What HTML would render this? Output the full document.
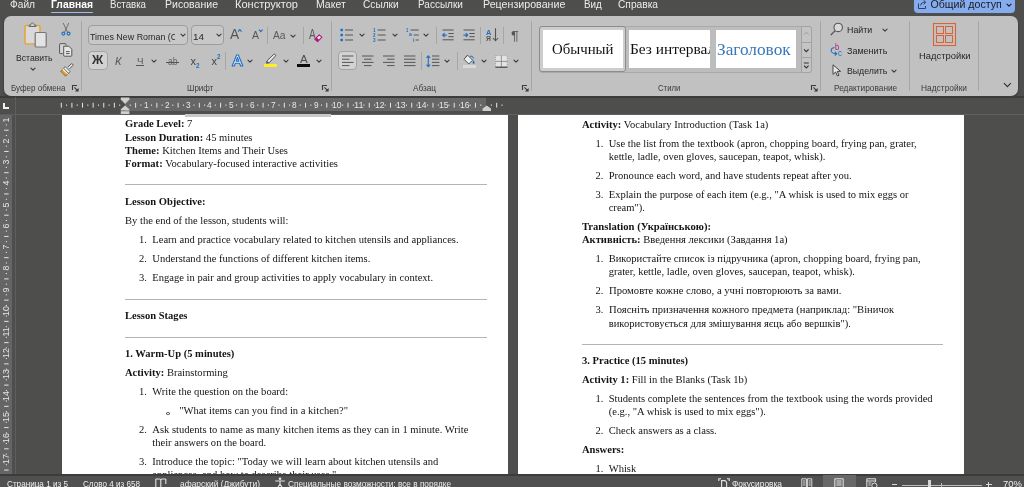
<!DOCTYPE html>
<html><head><meta charset="utf-8"><title>Word</title>
<style>
html,body{margin:0;padding:0}
body{width:1024px;height:487px;overflow:hidden;position:relative;background:#4e4f4d;font-family:"Liberation Sans",sans-serif}
.t{position:absolute;white-space:nowrap;transform-origin:0 50%;display:block}
.f{font-family:"Liberation Sans",sans-serif}
.r{font-family:"Liberation Serif",serif}
.a{position:absolute}
.sep{position:absolute;width:1px;background:#a9a9a9}
svg{position:absolute;overflow:visible}
</style></head><body><div id="w" style="position:absolute;left:0;top:0;width:1024px;height:487px;overflow:hidden;will-change:transform">
<span class="t f" style="left:9.5px;top:-1.56px;font-size:10.6px;line-height:12.72px;color:#ececec;transform:scaleX(0.960);">Файл</span>
<span class="t f" style="left:51px;top:-1.56px;font-size:10.6px;line-height:12.72px;color:#ffffff;font-weight:700;transform:scaleX(0.975);">Главная</span>
<span class="t f" style="left:110px;top:-1.56px;font-size:10.6px;line-height:12.72px;color:#ececec;transform:scaleX(0.914);">Вставка</span>
<span class="t f" style="left:165px;top:-1.56px;font-size:10.6px;line-height:12.72px;color:#ececec;transform:scaleX(0.993);">Рисование</span>
<span class="t f" style="left:235px;top:-1.56px;font-size:10.6px;line-height:12.72px;color:#ececec;transform:scaleX(1.043);">Конструктор</span>
<span class="t f" style="left:315.6px;top:-1.56px;font-size:10.6px;line-height:12.72px;color:#ececec;transform:scaleX(0.991);">Макет</span>
<span class="t f" style="left:363px;top:-1.56px;font-size:10.6px;line-height:12.72px;color:#ececec;transform:scaleX(0.957);">Ссылки</span>
<span class="t f" style="left:417.6px;top:-1.56px;font-size:10.6px;line-height:12.72px;color:#ececec;transform:scaleX(0.944);">Рассылки</span>
<span class="t f" style="left:482.6px;top:-1.56px;font-size:10.6px;line-height:12.72px;color:#ececec;transform:scaleX(1.007);">Рецензирование</span>
<span class="t f" style="left:583.5px;top:-1.56px;font-size:10.6px;line-height:12.72px;color:#ececec;transform:scaleX(0.928);">Вид</span>
<span class="t f" style="left:618.4px;top:-1.56px;font-size:10.6px;line-height:12.72px;color:#ececec;transform:scaleX(0.962);">Справка</span>
<div class="a" style="left:50.8px;top:11.8px;width:42px;height:1.3px;background:#9fbcf2;border-radius:1px"></div>
<div class="a" style="left:913.5px;top:-4px;width:101.5px;height:17.3px;background:#85acee;border-radius:4px"></div>
<svg style="left:917px;top:-1px" width="11" height="11" viewBox="0 0 11 11"><path d="M1.5 4.5V9.5H8.5V7" fill="none" stroke="#34405c" stroke-width="1"/><path d="M3.5 6.5C4 4.2 5.5 3.2 8 3.2M6.5 1L8.8 3.2L6.5 5.4" fill="none" stroke="#34405c" stroke-width="1"/></svg>
<span class="t f" style="left:930.5px;top:-1.96px;font-size:10.6px;line-height:12.72px;color:#1b1b1b;">Общий доступ</span>
<svg style="left:1005px;top:0.5px" width="8" height="8" viewBox="-4 -4 8 8"><path d="M-2.05 -0.825 L0 1.2249999999999999 L2.05 -0.825" fill="none" stroke="#1b1b1b" stroke-width="1.1" stroke-linecap="round" stroke-linejoin="round"/></svg>
<div class="a" style="left:4px;top:16px;width:1014px;height:80px;background:#c1c1c1;border-radius:7px;box-shadow:0 1px 2px rgba(0,0,0,.45)"></div>
<svg style="left:24px;top:22px" width="24" height="26" viewBox="0 0 24 26"><rect x="1" y="3.5" width="15" height="18.5" rx="1.2" fill="#d9d9d9" stroke="#e2a93b" stroke-width="1.6"/><path d="M5 4.5V3.2H6.6C6.8 1.6 7.6 1 8.5 1S10.2 1.6 10.4 3.2H12V4.5Z" fill="#cfcfcf" stroke="#6a6a6a" stroke-width="1"/><rect x="11.2" y="10.5" width="11" height="14.5" rx="1" fill="#e3e3e3" stroke="#767676" stroke-width="1.2"/></svg>
<span class="t f" style="left:15.5px;top:51.5px;font-size:9.5px;line-height:11.4px;color:#262626;transform:scaleX(0.906);">Вставить</span>
<svg style="left:29.299999999999997px;top:64.5px" width="8" height="8" viewBox="-4 -4 8 8"><path d="M-2.05 -0.825 L0 1.2249999999999999 L2.05 -0.825" fill="none" stroke="#3b3b3b" stroke-width="1.1" stroke-linecap="round" stroke-linejoin="round"/></svg>
<svg style="left:60px;top:22px" width="12" height="15" viewBox="0 0 12 15"><path d="M3.2 1L7.6 10.5M8.8 1L4.4 10.5" stroke="#666" stroke-width="0.9" fill="none"/><circle cx="3.4" cy="11.6" r="1.5" fill="none" stroke="#1e6fc4" stroke-width="1.1"/><circle cx="8.6" cy="11.6" r="1.5" fill="none" stroke="#1e6fc4" stroke-width="1.1"/></svg>
<svg style="left:59px;top:43px" width="14" height="14" viewBox="0 0 14 14"><path d="M3.5 10.5H1.2Q0.6 10.5 0.6 9.9V1.3Q0.6 0.7 1.2 0.7H6.4Q7 0.7 7 1.3V2.5" fill="#d6d6d6" stroke="#555" stroke-width="1"/><path d="M4.7 3.2H9.8L12.8 6.2V12.6Q12.8 13.2 12.2 13.2H5.3Q4.7 13.2 4.7 12.6Z" fill="#e6e6e6" stroke="#555" stroke-width="1"/><path d="M7 8.6H10.6M7 10.6H10.6" stroke="#555" stroke-width="1"/></svg>
<svg style="left:59.5px;top:63px" width="14" height="14" viewBox="0 0 14 14"><path d="M7.8 4.2L11.2 0.9Q11.9 0.4 12.6 1.1T12.7 2.6L9.4 5.9" fill="#e9e9e9" stroke="#555" stroke-width="1"/><path d="M5.2 3.6L10.2 8.6L8.4 10.2L3.6 5.2Z" fill="#f2f2f2" stroke="#555" stroke-width="0.9"/><path d="M3.3 5.6L8 10.4L5.6 13.2L0.7 8.2Z" fill="#e0a12e" stroke="#6b5320" stroke-width="0.7"/><path d="M3.3 5.6L8 10.4L7.2 11.3L2.4 6.5Z" fill="#f4f4f4"/></svg>
<span class="t f" style="left:10.5px;top:82.8px;font-size:9px;line-height:10.8px;color:#3c3c3c;transform:scaleX(0.891);">Буфер обмена</span>
<svg style="left:72px;top:85px" width="7" height="7" viewBox="0 0 7 7"><path d="M0.5 5V0.5H5" fill="none" stroke="#3a3a3a" stroke-width="1.1"/><path d="M2.4 2.4L5.6 5.6" fill="none" stroke="#3a3a3a" stroke-width="1.1"/><path d="M6.6 2.9V6.6H2.9Z" fill="#3a3a3a"/></svg>
<div class="a" style="left:80.5px;top:21px;width:1px;height:70px;background:#a6a6a6;"></div>
<div class="a" style="left:88px;top:25.4px;width:100px;height:19.2px;background:#c8c8c8;border:1px solid #9d9d9d;border-radius:4px;box-sizing:border-box"></div>
<span class="t f" style="left:90.3px;top:30.6px;font-size:9.5px;line-height:11.4px;color:#262626;transform:scaleX(0.937);">Times New Roman (C</span>
<div class="a" style="left:175px;top:27px;width:6px;height:15px;background:#c8c8c8;"></div>
<svg style="left:179px;top:31.299999999999997px" width="8" height="8" viewBox="-4 -4 8 8"><path d="M-2.05 -0.825 L0 1.2249999999999999 L2.05 -0.825" fill="none" stroke="#3b3b3b" stroke-width="1.1" stroke-linecap="round" stroke-linejoin="round"/></svg>
<div class="a" style="left:190.5px;top:25.4px;width:33px;height:19.2px;background:#c8c8c8;border:1px solid #9d9d9d;border-radius:4px;box-sizing:border-box"></div>
<span class="t f" style="left:192.5px;top:30.6px;font-size:9.5px;line-height:11.4px;color:#262626;transform:scaleX(1.040);">14</span>
<svg style="left:215px;top:31.299999999999997px" width="8" height="8" viewBox="-4 -4 8 8"><path d="M-2.05 -0.825 L0 1.2249999999999999 L2.05 -0.825" fill="none" stroke="#3b3b3b" stroke-width="1.1" stroke-linecap="round" stroke-linejoin="round"/></svg>
<span class="t f" style="left:229.6px;top:25.8px;font-size:14.5px;line-height:17.4px;color:#555;transform:scaleX(0.951);">A</span>
<svg style="left:237.3px;top:28.2px" width="6" height="5" viewBox="0 0 6 5"><path d="M1 3.6L2.8 1.6L4.6 3.6" fill="none" stroke="#1e6fc4" stroke-width="1.1"/></svg>
<span class="t f" style="left:252px;top:28.48px;font-size:11.7px;line-height:14.04px;color:#555;transform:scaleX(0.898);">A</span>
<svg style="left:258px;top:28.2px" width="6" height="5" viewBox="0 0 6 5"><path d="M1 1.6L2.8 3.6L4.6 1.6" fill="none" stroke="#1e6fc4" stroke-width="1.1"/></svg>
<div class="a" style="left:267.0px;top:27px;width:1px;height:17px;background:#a6a6a6;"></div>
<span class="t f" style="left:273.4px;top:28.58px;font-size:11.2px;line-height:13.44px;color:#5a5a5a;transform:scaleX(0.921);">Aa</span>
<svg style="left:289px;top:31.5px" width="8" height="8" viewBox="-4 -4 8 8"><path d="M-2.05 -0.825 L0 1.2249999999999999 L2.05 -0.825" fill="none" stroke="#3b3b3b" stroke-width="1.1" stroke-linecap="round" stroke-linejoin="round"/></svg>
<div class="a" style="left:303.0px;top:27px;width:1px;height:17px;background:#a6a6a6;"></div>
<span class="t f" style="left:308.8px;top:25.9px;font-size:14px;line-height:16.8px;color:#5a5a5a;transform:scaleX(0.728);">A</span>
<svg style="left:313.6px;top:33.6px" width="9" height="9" viewBox="0 0 9 9"><path d="M0.9 5.4L5.2 0.9L7.9 3.2L3.6 7.7Z" fill="#ececec" stroke="#b5177a" stroke-width="1.1" stroke-linejoin="round"/><path d="M0.9 5.4L2.6 3.6L5.3 5.9L3.6 7.7Z" fill="#b5177a"/></svg>
<div class="a" style="left:88.3px;top:51.2px;width:19.3px;height:19.3px;background:#d2d2d2;border:1px solid #a3a3a3;border-radius:4px;box-sizing:border-box"></div>
<span class="t f" style="left:92.4px;top:53.3px;font-size:12px;line-height:14.4px;color:#333;font-weight:700;transform:scaleX(1.022);">Ж</span>
<span class="t f" style="left:115px;top:55.0px;font-size:11px;line-height:13.2px;color:#555;font-style:italic;">К</span>
<span class="t f" style="left:136.5px;top:54.62px;font-size:9.8px;line-height:11.76px;color:#555;transform:scaleX(0.995);">Ч</span>
<div class="a" style="left:135.8px;top:65px;width:8px;height:1px;background:#555;"></div>
<svg style="left:150.3px;top:57.3px" width="8" height="8" viewBox="-4 -4 8 8"><path d="M-2.05 -0.825 L0 1.2249999999999999 L2.05 -0.825" fill="none" stroke="#3b3b3b" stroke-width="1.1" stroke-linecap="round" stroke-linejoin="round"/></svg>
<span class="t f" style="left:167.5px;top:54.72px;font-size:10.8px;line-height:12.96px;color:#666;transform:scaleX(0.791);">ab</span>
<div class="a" style="left:166px;top:61.6px;width:13px;height:1px;background:#555;"></div>
<span class="t f" style="left:190.5px;top:55.0px;font-size:11px;line-height:13.2px;color:#444;">x</span>
<span class="t f" style="left:196px;top:61.9px;font-size:6.5px;line-height:7.8px;color:#1e6fc4;font-weight:700;transform:scaleX(0.966);">2</span>
<span class="t f" style="left:211.5px;top:55.0px;font-size:11px;line-height:13.2px;color:#444;">x</span>
<span class="t f" style="left:217px;top:53.2px;font-size:6.5px;line-height:7.8px;color:#1e6fc4;font-weight:700;transform:scaleX(0.966);">2</span>
<div class="a" style="left:225.0px;top:52px;width:1px;height:18px;background:#a6a6a6;"></div>
<svg style="left:231px;top:54px" width="13" height="13" viewBox="0 0 13 13"><path d="M1.2 12L5.6 1H7.4L11.8 12H9.6L8.6 9.2H4.4L3.4 12Z M5.1 7.3H7.9L6.5 3.4Z" fill="#eaf2fb" stroke="#1e6fc4" stroke-width="1.1" stroke-linejoin="round"/></svg>
<svg style="left:246px;top:57.3px" width="8" height="8" viewBox="-4 -4 8 8"><path d="M-2.05 -0.825 L0 1.2249999999999999 L2.05 -0.825" fill="none" stroke="#3b3b3b" stroke-width="1.1" stroke-linecap="round" stroke-linejoin="round"/></svg>
<svg style="left:265px;top:53px" width="13" height="11" viewBox="0 0 13 11"><path d="M2.2 9.6L1.8 8L8.6 1.4Q9.4 0.8 10.2 1.5T10.4 3.1L4.2 9.8Z" fill="#e4e4e4" stroke="#555" stroke-width="1"/><path d="M1.8 8L4.2 9.8L2.6 10.6H0.9Z" fill="#555"/></svg>
<div class="a" style="left:264.2px;top:64px;width:13px;height:3.2px;background:#ffef1f;"></div>
<svg style="left:281.5px;top:57.3px" width="8" height="8" viewBox="-4 -4 8 8"><path d="M-2.05 -0.825 L0 1.2249999999999999 L2.05 -0.825" fill="none" stroke="#3b3b3b" stroke-width="1.1" stroke-linecap="round" stroke-linejoin="round"/></svg>
<span class="t f" style="left:299.5px;top:52.18px;font-size:11.7px;line-height:14.04px;color:#4a4a4a;transform:scaleX(0.988);">A</span>
<div class="a" style="left:297px;top:64px;width:13px;height:3.2px;background:#0c0c0c;"></div>
<svg style="left:314.5px;top:57.3px" width="8" height="8" viewBox="-4 -4 8 8"><path d="M-2.05 -0.825 L0 1.2249999999999999 L2.05 -0.825" fill="none" stroke="#3b3b3b" stroke-width="1.1" stroke-linecap="round" stroke-linejoin="round"/></svg>
<span class="t f" style="left:186.5px;top:82.8px;font-size:9px;line-height:10.8px;color:#3c3c3c;transform:scaleX(0.895);">Шрифт</span>
<svg style="left:322px;top:85px" width="7" height="7" viewBox="0 0 7 7"><path d="M0.5 5V0.5H5" fill="none" stroke="#3a3a3a" stroke-width="1.1"/><path d="M2.4 2.4L5.6 5.6" fill="none" stroke="#3a3a3a" stroke-width="1.1"/><path d="M6.6 2.9V6.6H2.9Z" fill="#3a3a3a"/></svg>
<div class="a" style="left:330.5px;top:21px;width:1px;height:70px;background:#a6a6a6;"></div>
<svg style="left:340px;top:27.5px" width="14" height="14" viewBox="0 0 14 14"><rect x="0.4" y="0.8" width="2.6" height="2.4" rx="0.6" fill="#1e6fc4"/><rect x="0.4" y="5.8" width="2.6" height="2.4" rx="0.6" fill="#1e6fc4"/><rect x="0.4" y="10.8" width="2.6" height="2.4" rx="0.6" fill="#1e6fc4"/><path d="M5 2H13" stroke="#555" stroke-width="1"/><path d="M5 7H13" stroke="#555" stroke-width="1"/><path d="M5 12H13" stroke="#555" stroke-width="1"/></svg>
<svg style="left:358px;top:31.299999999999997px" width="8" height="8" viewBox="-4 -4 8 8"><path d="M-2.05 -0.825 L0 1.2249999999999999 L2.05 -0.825" fill="none" stroke="#3b3b3b" stroke-width="1.1" stroke-linecap="round" stroke-linejoin="round"/></svg>
<svg style="left:373px;top:27.5px" width="14" height="14" viewBox="0 0 14 14"><path d="M4.6 2H12.6" stroke="#555" stroke-width="1"/><path d="M4.6 7H12.6" stroke="#555" stroke-width="1"/><path d="M4.6 12H12.6" stroke="#555" stroke-width="1"/></svg>
<span class="t f" style="left:373.2px;top:27.08px;font-size:5.2px;line-height:6.24px;color:#1e6fc4;font-weight:700;transform:scaleX(0.899);">1</span>
<span class="t f" style="left:373.2px;top:32.08px;font-size:5.2px;line-height:6.24px;color:#1e6fc4;font-weight:700;transform:scaleX(0.899);">2</span>
<span class="t f" style="left:373.2px;top:37.08px;font-size:5.2px;line-height:6.24px;color:#1e6fc4;font-weight:700;transform:scaleX(0.899);">3</span>
<svg style="left:390.7px;top:31.299999999999997px" width="8" height="8" viewBox="-4 -4 8 8"><path d="M-2.05 -0.825 L0 1.2249999999999999 L2.05 -0.825" fill="none" stroke="#3b3b3b" stroke-width="1.1" stroke-linecap="round" stroke-linejoin="round"/></svg>
<svg style="left:405.5px;top:27.5px" width="14" height="14" viewBox="0 0 14 14"><path d="M4.5 2H12.8" stroke="#555" stroke-width="1"/><path d="M7.8 7H12.8" stroke="#555" stroke-width="1"/><path d="M9.6 12H12.8" stroke="#555" stroke-width="1"/></svg>
<span class="t f" style="left:406px;top:27.28px;font-size:5.2px;line-height:6.24px;color:#1e6fc4;font-weight:700;transform:scaleX(0.796);">1</span>
<span class="t f" style="left:408.5px;top:31.44px;font-size:5.6px;line-height:6.72px;color:#1e6fc4;font-weight:700;transform:scaleX(0.928);">a</span>
<span class="t f" style="left:412.6px;top:36.64px;font-size:5.6px;line-height:6.72px;color:#1e6fc4;font-weight:700;transform:scaleX(0.896);">i</span>
<svg style="left:422px;top:31.299999999999997px" width="8" height="8" viewBox="-4 -4 8 8"><path d="M-2.05 -0.825 L0 1.2249999999999999 L2.05 -0.825" fill="none" stroke="#3b3b3b" stroke-width="1.1" stroke-linecap="round" stroke-linejoin="round"/></svg>
<div class="a" style="left:436.0px;top:27px;width:1px;height:17px;background:#a6a6a6;"></div>
<svg style="left:442.4px;top:28.5px" width="13" height="13" viewBox="0 0 13 13"><path d="M0.5 1H11.7" stroke="#555" stroke-width="1"/><path d="M0.5 10.8H11.7" stroke="#555" stroke-width="1"/><path d="M6.4 4.5H11.7" stroke="#555" stroke-width="1"/><path d="M6.4 7.7H11.7" stroke="#555" stroke-width="1"/><path d="M4.8 6.1H0.8M2.6 4.2L0.7 6.1L2.6 8" fill="none" stroke="#1e6fc4" stroke-width="1.1"/></svg>
<svg style="left:463.2px;top:28.5px" width="13" height="13" viewBox="0 0 13 13"><path d="M0.5 1H11.7" stroke="#555" stroke-width="1"/><path d="M0.5 10.8H11.7" stroke="#555" stroke-width="1"/><path d="M6.4 4.5H11.7" stroke="#555" stroke-width="1"/><path d="M6.4 7.7H11.7" stroke="#555" stroke-width="1"/><path d="M0.4 6.1H4.6M2.8 4.2L4.7 6.1L2.8 8" fill="none" stroke="#1e6fc4" stroke-width="1.1"/></svg>
<div class="a" style="left:479.5px;top:27px;width:1px;height:17px;background:#a6a6a6;"></div>
<span class="t f" style="left:486px;top:27.52px;font-size:7.8px;line-height:9.36px;color:#1e6fc4;font-weight:700;transform:scaleX(0.940);">A</span>
<span class="t f" style="left:486.3px;top:34.88px;font-size:7.2px;line-height:8.64px;color:#555;font-weight:700;transform:scaleX(0.947);">Я</span>
<svg style="left:492.3px;top:28.3px" width="7" height="14" viewBox="0 0 7 14"><path d="M3.5 0.3V12.6M0.9 10L3.5 12.8L6.1 10" fill="none" stroke="#555" stroke-width="1.1"/></svg>
<div class="a" style="left:503.0px;top:27px;width:1px;height:17px;background:#a6a6a6;"></div>
<span class="t f" style="left:511px;top:28.6px;font-size:12.5px;line-height:15.0px;color:#555;transform:scaleX(1.161);">¶</span>
<div class="a" style="left:337.5px;top:51.2px;width:19.3px;height:19.3px;background:#d2d2d2;border:1px solid #a3a3a3;border-radius:4px;box-sizing:border-box"></div>
<svg style="left:341.5px;top:54.6px" width="12" height="12" viewBox="0 0 12 12"><path d="M0 1H11.5" stroke="#555" stroke-width="1"/><path d="M0 7.4H11.5" stroke="#555" stroke-width="1"/><path d="M0 4.2H7.5" stroke="#555" stroke-width="1"/><path d="M0 10.6H7.5" stroke="#555" stroke-width="1"/></svg>
<svg style="left:362px;top:54.6px" width="12" height="12" viewBox="0 0 12 12"><path d="M0 1H11.5" stroke="#555" stroke-width="1"/><path d="M0 7.4H11.5" stroke="#555" stroke-width="1"/><path d="M2 4.2H9.5" stroke="#555" stroke-width="1"/><path d="M2 10.6H9.5" stroke="#555" stroke-width="1"/></svg>
<svg style="left:383.3px;top:54.6px" width="12" height="12" viewBox="0 0 12 12"><path d="M0 1H11.5" stroke="#555" stroke-width="1"/><path d="M0 7.4H11.5" stroke="#555" stroke-width="1"/><path d="M4 4.2H11.5" stroke="#555" stroke-width="1"/><path d="M4 10.6H11.5" stroke="#555" stroke-width="1"/></svg>
<svg style="left:404.3px;top:54.6px" width="12" height="12" viewBox="0 0 12 12"><path d="M0 1H11.5" stroke="#555" stroke-width="1"/><path d="M0 4.2H11.5" stroke="#555" stroke-width="1"/><path d="M0 7.4H11.5" stroke="#555" stroke-width="1"/><path d="M0 10.6H11.5" stroke="#555" stroke-width="1"/></svg>
<div class="a" style="left:420.5px;top:52px;width:1px;height:18px;background:#a6a6a6;"></div>
<svg style="left:426px;top:54.6px" width="14" height="14" viewBox="0 0 14 14"><path d="M6 1H13.4" stroke="#555" stroke-width="1"/><path d="M6 4.2H13.4" stroke="#555" stroke-width="1"/><path d="M6 7.4H13.4" stroke="#555" stroke-width="1"/><path d="M6 10.6H13.4" stroke="#555" stroke-width="1"/><path d="M2.3 0.8V11.6M0.5 2.8L2.3 0.8L4.1 2.8M0.5 9.6L2.3 11.6L4.1 9.6" fill="none" stroke="#1e6fc4" stroke-width="1.1"/></svg>
<svg style="left:442.5px;top:57.3px" width="8" height="8" viewBox="-4 -4 8 8"><path d="M-2.05 -0.825 L0 1.2249999999999999 L2.05 -0.825" fill="none" stroke="#3b3b3b" stroke-width="1.1" stroke-linecap="round" stroke-linejoin="round"/></svg>
<div class="a" style="left:456.5px;top:52px;width:1px;height:18px;background:#a6a6a6;"></div>
<svg style="left:463px;top:53.5px" width="13" height="12" viewBox="0 0 13 12"><path d="M4.6 1.2L9.6 6.2L5.8 10L1 5.2Z" fill="#ededed" stroke="#555" stroke-width="1"/><path d="M4.6 1.2L2.6 3.2" stroke="#555" stroke-width="1"/><path d="M10.6 6.2Q12.2 8.6 11.4 9.4T9.8 9.4T10.6 6.2Z" fill="#1e6fc4"/><path d="M7 2.2Q9.8 1.2 10.6 4.6" fill="none" stroke="#1e6fc4" stroke-width="1"/></svg>
<div class="a" style="left:463px;top:65.2px;width:12.5px;height:2.6px;background:#d9d9d9;"></div>
<svg style="left:479.5px;top:57.3px" width="8" height="8" viewBox="-4 -4 8 8"><path d="M-2.05 -0.825 L0 1.2249999999999999 L2.05 -0.825" fill="none" stroke="#3b3b3b" stroke-width="1.1" stroke-linecap="round" stroke-linejoin="round"/></svg>
<svg style="left:494.5px;top:54.5px" width="13" height="13" viewBox="0 0 13 13"><rect x="0.6" y="0.6" width="11.6" height="11.6" fill="#e4e4e4" stroke="#9a9a9a" stroke-width="0.8" stroke-dasharray="1 1"/><path d="M6.4 0.4V12.4M0.4 6.4H12.4" stroke="#8a8a8a" stroke-width="0.9"/><path d="M0.4 12.2H12.4" stroke="#444" stroke-width="1.2"/></svg>
<svg style="left:512px;top:57.3px" width="8" height="8" viewBox="-4 -4 8 8"><path d="M-2.05 -0.825 L0 1.2249999999999999 L2.05 -0.825" fill="none" stroke="#3b3b3b" stroke-width="1.1" stroke-linecap="round" stroke-linejoin="round"/></svg>
<span class="t f" style="left:413px;top:82.8px;font-size:9px;line-height:10.8px;color:#3c3c3c;transform:scaleX(0.911);">Абзац</span>
<svg style="left:521.5px;top:85px" width="7" height="7" viewBox="0 0 7 7"><path d="M0.5 5V0.5H5" fill="none" stroke="#3a3a3a" stroke-width="1.1"/><path d="M2.4 2.4L5.6 5.6" fill="none" stroke="#3a3a3a" stroke-width="1.1"/><path d="M6.6 2.9V6.6H2.9Z" fill="#3a3a3a"/></svg>
<div class="a" style="left:530.5px;top:21px;width:1px;height:70px;background:#a6a6a6;"></div>
<div class="a" style="left:539px;top:25.7px;width:273px;height:47.4px;background:#bdbdbd;border:1px solid #a9a9a9;border-radius:3px;box-sizing:border-box"></div>
<div class="a" style="left:539.2px;top:25.8px;width:86.4px;height:46px;background:#cdcdcd;border:1.4px solid #8c8c8c;border-radius:3px;box-sizing:border-box"></div>
<div class="a" style="left:542.5px;top:30px;width:80px;height:38px;background:#ffffff;"></div>
<div class="a" style="left:629px;top:30px;width:80.5px;height:38px;background:#ffffff;"></div>
<div class="a" style="left:715.7px;top:30px;width:80.3px;height:38px;background:#ffffff;"></div>
<span class="t r" style="left:551.5px;top:40.3px;font-size:15px;line-height:18.0px;color:#111;transform:scaleX(0.988);">Обычный</span>
<div class="a" style="left:629px;top:30px;width:80.5px;height:38px;overflow:hidden">
<span class="t r" style="left:1.2px;top:10.3px;font-size:15px;line-height:18.0px;color:#111;transform:scaleX(1.025);">Без интервал</span>
</div>
<span class="t r" style="left:717.3px;top:40.1px;font-size:16px;line-height:19.2px;color:#3a78b8;transform:scaleX(1.079);">Заголовок</span>
<div class="a" style="left:800.5px;top:26px;width:11.5px;height:47px;background:#c4c4c4;border:1px solid #a2a2a2;border-radius:0 3px 3px 0;box-sizing:border-box"></div>
<div class="a" style="left:800.5px;top:41.5px;width:11.5px;height:1px;background:#a2a2a2;"></div>
<div class="a" style="left:800.5px;top:57.3px;width:11.5px;height:1px;background:#a2a2a2;"></div>
<svg style="left:803px;top:31px" width="7" height="5" viewBox="0 0 7 5"><path d="M1 3.6L3.3 1.3L5.6 3.6" fill="none" stroke="#9a9a9a" stroke-width="1"/></svg>
<svg style="left:803px;top:47.5px" width="7" height="5" viewBox="0 0 7 5"><path d="M1 1.3L3.3 3.6L5.6 1.3" fill="none" stroke="#333" stroke-width="1.1"/></svg>
<svg style="left:803px;top:61.5px" width="7" height="8" viewBox="0 0 7 8"><path d="M0.8 1H5.8" stroke="#333" stroke-width="1"/><path d="M1 3.6L3.3 5.9L5.6 3.6" fill="none" stroke="#333" stroke-width="1.1"/></svg>
<span class="t f" style="left:657.7px;top:82.8px;font-size:9px;line-height:10.8px;color:#3c3c3c;transform:scaleX(0.860);">Стили</span>
<svg style="left:811px;top:85px" width="7" height="7" viewBox="0 0 7 7"><path d="M0.5 5V0.5H5" fill="none" stroke="#3a3a3a" stroke-width="1.1"/><path d="M2.4 2.4L5.6 5.6" fill="none" stroke="#3a3a3a" stroke-width="1.1"/><path d="M6.6 2.9V6.6H2.9Z" fill="#3a3a3a"/></svg>
<div class="a" style="left:820.0px;top:21px;width:1px;height:70px;background:#a6a6a6;"></div>
<svg style="left:830px;top:21.5px" width="14" height="14" viewBox="0 0 14 14"><circle cx="8.2" cy="5.4" r="4.2" fill="#d9d9d9" stroke="#555" stroke-width="1.1"/><path d="M5.2 8.6L0.8 13" stroke="#555" stroke-width="1.3"/></svg>
<span class="t f" style="left:846.7px;top:23.8px;font-size:9.5px;line-height:11.4px;color:#262626;transform:scaleX(0.933);">Найти</span>
<svg style="left:881px;top:25.7px" width="8" height="8" viewBox="-4 -4 8 8"><path d="M-2.05 -0.825 L0 1.2249999999999999 L2.05 -0.825" fill="none" stroke="#3b3b3b" stroke-width="1.1" stroke-linecap="round" stroke-linejoin="round"/></svg>
<span class="t f" style="left:834.8px;top:41.5px;font-size:9px;line-height:10.8px;color:#b5177a;transform:scaleX(0.837);">b</span>
<span class="t f" style="left:837.8px;top:47.5px;font-size:9px;line-height:10.8px;color:#1e6fc4;transform:scaleX(0.889);">c</span>
<svg style="left:829.5px;top:46px" width="9" height="10" viewBox="0 0 9 10"><path d="M4.6 1.5Q0.6 2.2 1.2 5Q1.8 7.7 6.4 7.7M4.8 5.9L6.7 7.7L4.8 9.5" fill="none" stroke="#1e6fc4" stroke-width="1.1"/></svg>
<span class="t f" style="left:846.7px;top:44.5px;font-size:9.5px;line-height:11.4px;color:#262626;transform:scaleX(0.944);">Заменить</span>
<svg style="left:831.5px;top:64px" width="10" height="13" viewBox="0 0 10 13"><path d="M1 0.8V10.4L3.6 8L5.4 12L7 11.2L5.2 7.4H8.6Z" fill="#e8e8e8" stroke="#444" stroke-width="1" stroke-linejoin="round"/></svg>
<span class="t f" style="left:846.7px;top:65.2px;font-size:9.5px;line-height:11.4px;color:#262626;transform:scaleX(0.920);">Выделить</span>
<svg style="left:889.5px;top:66.8px" width="8" height="8" viewBox="-4 -4 8 8"><path d="M-2.05 -0.825 L0 1.2249999999999999 L2.05 -0.825" fill="none" stroke="#3b3b3b" stroke-width="1.1" stroke-linecap="round" stroke-linejoin="round"/></svg>
<span class="t f" style="left:833.5px;top:82.8px;font-size:9px;line-height:10.8px;color:#3c3c3c;transform:scaleX(0.922);">Редактирование</span>
<div class="a" style="left:908.5px;top:21px;width:1px;height:70px;background:#a6a6a6;"></div>
<svg style="left:933px;top:23px" width="23" height="23" viewBox="0 0 23 23"><rect x="0.5" y="0.5" width="22" height="22" fill="#c6c0bd" stroke="#d8623a" stroke-width="1.1"/><rect x="3.5" y="3.5" width="7" height="7" fill="#c4c1bf" stroke="#d8623a" stroke-width="1"/><rect x="3.5" y="12.5" width="7" height="7" fill="#c4c1bf" stroke="#d8623a" stroke-width="1"/><rect x="12.5" y="3.5" width="7" height="7" fill="#c4c1bf" stroke="#d8623a" stroke-width="1"/><rect x="12.5" y="12.5" width="7" height="7" fill="#c4c1bf" stroke="#d8623a" stroke-width="1"/></svg>
<span class="t f" style="left:918.5px;top:49.9px;font-size:9.5px;line-height:11.4px;color:#262626;transform:scaleX(0.988);">Надстройки</span>
<span class="t f" style="left:921px;top:82.8px;font-size:9px;line-height:10.8px;color:#3c3c3c;transform:scaleX(0.931);">Надстройки</span>
<div class="a" style="left:978.0px;top:21px;width:1px;height:70px;background:#a6a6a6;"></div>
<svg style="left:1002.5px;top:82px" width="9" height="6" viewBox="0 0 9 6"><path d="M1 1.2L4.4 4.6L7.8 1.2" fill="none" stroke="#333" stroke-width="1.2"/></svg>
<div class="a" style="left:0px;top:96px;width:1024px;height:2.2px;background:#3c3c3c;"></div>
<div class="a" style="left:125.0px;top:98.2px;width:361.0px;height:12.8px;background:#676767;"></div>
<svg style="left:0;top:0" width="1024" height="120" viewBox="0 0 1024 120"><rect x="119.19" y="104.5" width="1" height="1.3" fill="#e6e6e6"/><rect x="113.88" y="102.8" width="1" height="4.8" fill="#e6e6e6"/><rect x="108.57" y="104.5" width="1" height="1.3" fill="#e6e6e6"/><rect x="103.26" y="102.8" width="1" height="4.8" fill="#e6e6e6"/><rect x="97.95" y="104.5" width="1" height="1.3" fill="#e6e6e6"/><rect x="92.64" y="102.8" width="1" height="4.8" fill="#e6e6e6"/><rect x="87.33" y="104.5" width="1" height="1.3" fill="#e6e6e6"/><rect x="82.02" y="102.8" width="1" height="4.8" fill="#e6e6e6"/><rect x="76.71" y="104.5" width="1" height="1.3" fill="#e6e6e6"/><rect x="71.40" y="102.8" width="1" height="4.8" fill="#e6e6e6"/><rect x="66.09" y="104.5" width="1" height="1.3" fill="#e6e6e6"/><rect x="60.78" y="102.8" width="1" height="4.8" fill="#e6e6e6"/><rect x="129.81" y="104.5" width="1" height="1.3" fill="#e6e6e6"/><rect x="135.12" y="102.8" width="1" height="4.8" fill="#e6e6e6"/><rect x="140.43" y="104.5" width="1" height="1.3" fill="#e6e6e6"/><rect x="151.05" y="104.5" width="1" height="1.3" fill="#e6e6e6"/><rect x="156.36" y="102.8" width="1" height="4.8" fill="#e6e6e6"/><rect x="161.67" y="104.5" width="1" height="1.3" fill="#e6e6e6"/><rect x="172.29" y="104.5" width="1" height="1.3" fill="#e6e6e6"/><rect x="177.60" y="102.8" width="1" height="4.8" fill="#e6e6e6"/><rect x="182.91" y="104.5" width="1" height="1.3" fill="#e6e6e6"/><rect x="193.53" y="104.5" width="1" height="1.3" fill="#e6e6e6"/><rect x="198.84" y="102.8" width="1" height="4.8" fill="#e6e6e6"/><rect x="204.15" y="104.5" width="1" height="1.3" fill="#e6e6e6"/><rect x="214.77" y="104.5" width="1" height="1.3" fill="#e6e6e6"/><rect x="220.08" y="102.8" width="1" height="4.8" fill="#e6e6e6"/><rect x="225.39" y="104.5" width="1" height="1.3" fill="#e6e6e6"/><rect x="236.01" y="104.5" width="1" height="1.3" fill="#e6e6e6"/><rect x="241.32" y="102.8" width="1" height="4.8" fill="#e6e6e6"/><rect x="246.63" y="104.5" width="1" height="1.3" fill="#e6e6e6"/><rect x="257.25" y="104.5" width="1" height="1.3" fill="#e6e6e6"/><rect x="262.56" y="102.8" width="1" height="4.8" fill="#e6e6e6"/><rect x="267.87" y="104.5" width="1" height="1.3" fill="#e6e6e6"/><rect x="278.49" y="104.5" width="1" height="1.3" fill="#e6e6e6"/><rect x="283.80" y="102.8" width="1" height="4.8" fill="#e6e6e6"/><rect x="289.11" y="104.5" width="1" height="1.3" fill="#e6e6e6"/><rect x="299.73" y="104.5" width="1" height="1.3" fill="#e6e6e6"/><rect x="305.04" y="102.8" width="1" height="4.8" fill="#e6e6e6"/><rect x="310.35" y="104.5" width="1" height="1.3" fill="#e6e6e6"/><rect x="320.97" y="104.5" width="1" height="1.3" fill="#e6e6e6"/><rect x="326.28" y="102.8" width="1" height="4.8" fill="#e6e6e6"/><rect x="331.59" y="104.5" width="1" height="1.3" fill="#e6e6e6"/><rect x="342.21" y="104.5" width="1" height="1.3" fill="#e6e6e6"/><rect x="347.52" y="102.8" width="1" height="4.8" fill="#e6e6e6"/><rect x="352.83" y="104.5" width="1" height="1.3" fill="#e6e6e6"/><rect x="363.45" y="104.5" width="1" height="1.3" fill="#e6e6e6"/><rect x="368.76" y="102.8" width="1" height="4.8" fill="#e6e6e6"/><rect x="374.07" y="104.5" width="1" height="1.3" fill="#e6e6e6"/><rect x="384.69" y="104.5" width="1" height="1.3" fill="#e6e6e6"/><rect x="390.00" y="102.8" width="1" height="4.8" fill="#e6e6e6"/><rect x="395.31" y="104.5" width="1" height="1.3" fill="#e6e6e6"/><rect x="405.93" y="104.5" width="1" height="1.3" fill="#e6e6e6"/><rect x="411.24" y="102.8" width="1" height="4.8" fill="#e6e6e6"/><rect x="416.55" y="104.5" width="1" height="1.3" fill="#e6e6e6"/><rect x="427.17" y="104.5" width="1" height="1.3" fill="#e6e6e6"/><rect x="432.48" y="102.8" width="1" height="4.8" fill="#e6e6e6"/><rect x="437.79" y="104.5" width="1" height="1.3" fill="#e6e6e6"/><rect x="448.41" y="104.5" width="1" height="1.3" fill="#e6e6e6"/><rect x="453.72" y="102.8" width="1" height="4.8" fill="#e6e6e6"/><rect x="459.03" y="104.5" width="1" height="1.3" fill="#e6e6e6"/><rect x="469.65" y="104.5" width="1" height="1.3" fill="#e6e6e6"/><rect x="474.96" y="102.8" width="1" height="4.8" fill="#e6e6e6"/><rect x="480.27" y="104.5" width="1" height="1.3" fill="#e6e6e6"/><rect x="490.89" y="104.5" width="1" height="1.3" fill="#e6e6e6"/><rect x="496.20" y="102.8" width="1" height="4.8" fill="#e6e6e6"/><rect x="501.51" y="104.5" width="1" height="1.3" fill="#e6e6e6"/><path d="M120.8 97.6H129.4V99.6L125.1 103.9L120.8 99.6Z" fill="#cfcfcf"/><path d="M125.1 105.6L129.4 109.2V110.6H120.8V109.2Z" fill="#cfcfcf"/><rect x="120.8" y="111.2" width="8.6" height="3" fill="#cfcfcf"/><path d="M486.8 105.4L491 108.6V111H482.6V108.6Z" fill="#cfcfcf"/></svg>
<span class="t f" style="left:143.74px;top:100.12px;font-size:8.8px;line-height:10.56px;color:#e6e6e6;transform:scaleX(0.938);">1</span>
<span class="t f" style="left:164.98px;top:100.12px;font-size:8.8px;line-height:10.56px;color:#e6e6e6;transform:scaleX(0.938);">2</span>
<span class="t f" style="left:186.22px;top:100.12px;font-size:8.8px;line-height:10.56px;color:#e6e6e6;transform:scaleX(0.938);">3</span>
<span class="t f" style="left:207.46px;top:100.12px;font-size:8.8px;line-height:10.56px;color:#e6e6e6;transform:scaleX(0.938);">4</span>
<span class="t f" style="left:228.7px;top:100.12px;font-size:8.8px;line-height:10.56px;color:#e6e6e6;transform:scaleX(0.938);">5</span>
<span class="t f" style="left:249.94px;top:100.12px;font-size:8.8px;line-height:10.56px;color:#e6e6e6;transform:scaleX(0.938);">6</span>
<span class="t f" style="left:271.18px;top:100.12px;font-size:8.8px;line-height:10.56px;color:#e6e6e6;transform:scaleX(0.938);">7</span>
<span class="t f" style="left:292.42px;top:100.12px;font-size:8.8px;line-height:10.56px;color:#e6e6e6;transform:scaleX(0.938);">8</span>
<span class="t f" style="left:313.66px;top:100.12px;font-size:8.8px;line-height:10.56px;color:#e6e6e6;transform:scaleX(0.938);">9</span>
<span class="t f" style="left:332.4px;top:100.12px;font-size:8.8px;line-height:10.56px;color:#e6e6e6;transform:scaleX(0.980);">10</span>
<span class="t f" style="left:353.64px;top:100.12px;font-size:8.8px;line-height:10.56px;color:#e6e6e6;transform:scaleX(1.050);">11</span>
<span class="t f" style="left:374.88px;top:100.12px;font-size:8.8px;line-height:10.56px;color:#e6e6e6;transform:scaleX(0.980);">12</span>
<span class="t f" style="left:396.12px;top:100.12px;font-size:8.8px;line-height:10.56px;color:#e6e6e6;transform:scaleX(0.980);">13</span>
<span class="t f" style="left:417.36px;top:100.12px;font-size:8.8px;line-height:10.56px;color:#e6e6e6;transform:scaleX(0.980);">14</span>
<span class="t f" style="left:438.6px;top:100.12px;font-size:8.8px;line-height:10.56px;color:#e6e6e6;transform:scaleX(0.980);">15</span>
<span class="t f" style="left:459.84px;top:100.12px;font-size:8.8px;line-height:10.56px;color:#e6e6e6;transform:scaleX(0.980);">16</span>
<svg style="left:3px;top:103px" width="6" height="6" viewBox="0 0 6 6"><path d="M1 0V5H6" fill="none" stroke="#f2f2f2" stroke-width="2"/></svg>
<div class="a" style="left:0px;top:114px;width:12.3px;height:361px;background:#656565;"></div>
<div class="a" style="left:0px;top:113.5px;width:15.5px;height:0.8px;background:#5d5d5d;"></div>
<div class="a" style="left:15.2px;top:97px;width:0.9px;height:378px;background:#5e5e5e;"></div>
<svg style="left:0;top:0" width="16" height="475" viewBox="0 0 16 475"><rect x="5.8" y="124.41" width="1.2" height="1" fill="#e6e6e6"/><rect x="4.2" y="129.72" width="4.4" height="1" fill="#e6e6e6"/><rect x="5.8" y="135.03" width="1.2" height="1" fill="#e6e6e6"/><rect x="5.8" y="145.65" width="1.2" height="1" fill="#e6e6e6"/><rect x="4.2" y="150.96" width="4.4" height="1" fill="#e6e6e6"/><rect x="5.8" y="156.27" width="1.2" height="1" fill="#e6e6e6"/><rect x="5.8" y="166.89" width="1.2" height="1" fill="#e6e6e6"/><rect x="4.2" y="172.20" width="4.4" height="1" fill="#e6e6e6"/><rect x="5.8" y="177.51" width="1.2" height="1" fill="#e6e6e6"/><rect x="5.8" y="188.13" width="1.2" height="1" fill="#e6e6e6"/><rect x="4.2" y="193.44" width="4.4" height="1" fill="#e6e6e6"/><rect x="5.8" y="198.75" width="1.2" height="1" fill="#e6e6e6"/><rect x="5.8" y="209.37" width="1.2" height="1" fill="#e6e6e6"/><rect x="4.2" y="214.68" width="4.4" height="1" fill="#e6e6e6"/><rect x="5.8" y="219.99" width="1.2" height="1" fill="#e6e6e6"/><rect x="5.8" y="230.61" width="1.2" height="1" fill="#e6e6e6"/><rect x="4.2" y="235.92" width="4.4" height="1" fill="#e6e6e6"/><rect x="5.8" y="241.23" width="1.2" height="1" fill="#e6e6e6"/><rect x="5.8" y="251.85" width="1.2" height="1" fill="#e6e6e6"/><rect x="4.2" y="257.16" width="4.4" height="1" fill="#e6e6e6"/><rect x="5.8" y="262.47" width="1.2" height="1" fill="#e6e6e6"/><rect x="5.8" y="273.09" width="1.2" height="1" fill="#e6e6e6"/><rect x="4.2" y="278.40" width="4.4" height="1" fill="#e6e6e6"/><rect x="5.8" y="283.71" width="1.2" height="1" fill="#e6e6e6"/><rect x="5.8" y="294.33" width="1.2" height="1" fill="#e6e6e6"/><rect x="4.2" y="299.64" width="4.4" height="1" fill="#e6e6e6"/><rect x="5.8" y="304.95" width="1.2" height="1" fill="#e6e6e6"/><rect x="5.8" y="315.57" width="1.2" height="1" fill="#e6e6e6"/><rect x="4.2" y="320.88" width="4.4" height="1" fill="#e6e6e6"/><rect x="5.8" y="326.19" width="1.2" height="1" fill="#e6e6e6"/><rect x="5.8" y="336.81" width="1.2" height="1" fill="#e6e6e6"/><rect x="4.2" y="342.12" width="4.4" height="1" fill="#e6e6e6"/><rect x="5.8" y="347.43" width="1.2" height="1" fill="#e6e6e6"/><rect x="5.8" y="358.05" width="1.2" height="1" fill="#e6e6e6"/><rect x="4.2" y="363.36" width="4.4" height="1" fill="#e6e6e6"/><rect x="5.8" y="368.67" width="1.2" height="1" fill="#e6e6e6"/><rect x="5.8" y="379.29" width="1.2" height="1" fill="#e6e6e6"/><rect x="4.2" y="384.60" width="4.4" height="1" fill="#e6e6e6"/><rect x="5.8" y="389.91" width="1.2" height="1" fill="#e6e6e6"/><rect x="5.8" y="400.53" width="1.2" height="1" fill="#e6e6e6"/><rect x="4.2" y="405.84" width="4.4" height="1" fill="#e6e6e6"/><rect x="5.8" y="411.15" width="1.2" height="1" fill="#e6e6e6"/><rect x="5.8" y="421.77" width="1.2" height="1" fill="#e6e6e6"/><rect x="4.2" y="427.08" width="4.4" height="1" fill="#e6e6e6"/><rect x="5.8" y="432.39" width="1.2" height="1" fill="#e6e6e6"/><rect x="5.8" y="443.01" width="1.2" height="1" fill="#e6e6e6"/><rect x="4.2" y="448.32" width="4.4" height="1" fill="#e6e6e6"/><rect x="5.8" y="453.63" width="1.2" height="1" fill="#e6e6e6"/><rect x="5.8" y="464.25" width="1.2" height="1" fill="#e6e6e6"/><rect x="4.2" y="469.56" width="4.4" height="1" fill="#e6e6e6"/></svg>
<span class="t f" style="left:6.3px;top:119.60px;font-size:8.8px;line-height:10px;color:#e6e6e6;transform:translate(-50%,-50%) rotate(-90deg);transform-origin:50% 50%">1</span>
<span class="t f" style="left:6.3px;top:140.84px;font-size:8.8px;line-height:10px;color:#e6e6e6;transform:translate(-50%,-50%) rotate(-90deg);transform-origin:50% 50%">2</span>
<span class="t f" style="left:6.3px;top:162.08px;font-size:8.8px;line-height:10px;color:#e6e6e6;transform:translate(-50%,-50%) rotate(-90deg);transform-origin:50% 50%">3</span>
<span class="t f" style="left:6.3px;top:183.32px;font-size:8.8px;line-height:10px;color:#e6e6e6;transform:translate(-50%,-50%) rotate(-90deg);transform-origin:50% 50%">4</span>
<span class="t f" style="left:6.3px;top:204.56px;font-size:8.8px;line-height:10px;color:#e6e6e6;transform:translate(-50%,-50%) rotate(-90deg);transform-origin:50% 50%">5</span>
<span class="t f" style="left:6.3px;top:225.80px;font-size:8.8px;line-height:10px;color:#e6e6e6;transform:translate(-50%,-50%) rotate(-90deg);transform-origin:50% 50%">6</span>
<span class="t f" style="left:6.3px;top:247.04px;font-size:8.8px;line-height:10px;color:#e6e6e6;transform:translate(-50%,-50%) rotate(-90deg);transform-origin:50% 50%">7</span>
<span class="t f" style="left:6.3px;top:268.28px;font-size:8.8px;line-height:10px;color:#e6e6e6;transform:translate(-50%,-50%) rotate(-90deg);transform-origin:50% 50%">8</span>
<span class="t f" style="left:6.3px;top:289.52px;font-size:8.8px;line-height:10px;color:#e6e6e6;transform:translate(-50%,-50%) rotate(-90deg);transform-origin:50% 50%">9</span>
<span class="t f" style="left:6.3px;top:310.76px;font-size:8.8px;line-height:10px;color:#e6e6e6;transform:translate(-50%,-50%) rotate(-90deg);transform-origin:50% 50%">10</span>
<span class="t f" style="left:6.3px;top:332.00px;font-size:8.8px;line-height:10px;color:#e6e6e6;transform:translate(-50%,-50%) rotate(-90deg);transform-origin:50% 50%">11</span>
<span class="t f" style="left:6.3px;top:353.24px;font-size:8.8px;line-height:10px;color:#e6e6e6;transform:translate(-50%,-50%) rotate(-90deg);transform-origin:50% 50%">12</span>
<span class="t f" style="left:6.3px;top:374.48px;font-size:8.8px;line-height:10px;color:#e6e6e6;transform:translate(-50%,-50%) rotate(-90deg);transform-origin:50% 50%">13</span>
<span class="t f" style="left:6.3px;top:395.72px;font-size:8.8px;line-height:10px;color:#e6e6e6;transform:translate(-50%,-50%) rotate(-90deg);transform-origin:50% 50%">14</span>
<span class="t f" style="left:6.3px;top:416.96px;font-size:8.8px;line-height:10px;color:#e6e6e6;transform:translate(-50%,-50%) rotate(-90deg);transform-origin:50% 50%">15</span>
<span class="t f" style="left:6.3px;top:438.20px;font-size:8.8px;line-height:10px;color:#e6e6e6;transform:translate(-50%,-50%) rotate(-90deg);transform-origin:50% 50%">16</span>
<span class="t f" style="left:6.3px;top:459.44px;font-size:8.8px;line-height:10px;color:#e6e6e6;transform:translate(-50%,-50%) rotate(-90deg);transform-origin:50% 50%">17</span>
<div class="a" style="left:16px;top:114px;width:1008px;height:1px;background:#5f615f;"></div>
<div class="a" style="left:62px;top:114.5px;width:446px;height:361px;background:#ffffff;"></div>
<div class="a" style="left:518px;top:114.5px;width:446px;height:361px;background:#ffffff;"></div>
<div class="a" style="left:185px;top:114.3px;width:146px;height:2.7px;background:#c9c9c9;"></div>
<span class="t r" style="left:125px;top:118.37px;font-size:10.55px;line-height:12.66px;color:#141414;"><b>Grade Level:</b> 7</span>
<span class="t r" style="left:125px;top:131.57px;font-size:10.55px;line-height:12.66px;color:#141414;"><b>Lesson Duration:</b> 45 minutes</span>
<span class="t r" style="left:125px;top:144.67px;font-size:10.55px;line-height:12.66px;color:#141414;"><b>Theme:</b> Kitchen Items and Their Uses</span>
<span class="t r" style="left:125px;top:157.77px;font-size:10.55px;line-height:12.66px;color:#141414;transform:scaleX(1.005);"><b>Format:</b> Vocabulary-focused interactive activities</span>
<div class="a" style="left:125px;top:184.0px;width:362px;height:1.1px;background:#b4b4b4;"></div>
<span class="t r" style="left:125px;top:196.27px;font-size:10.55px;line-height:12.66px;color:#141414;"><b>Lesson Objective:</b></span>
<span class="t r" style="left:125px;top:214.97px;font-size:10.55px;line-height:12.66px;color:#141414;">By the end of the lesson, students will:</span>
<span class="t r" style="left:139px;top:234.07px;font-size:10.55px;line-height:12.66px;color:#141414;">1.</span>
<span class="t r" style="left:152.3px;top:234.07px;font-size:10.55px;line-height:12.66px;color:#141414;">Learn and practice vocabulary related to kitchen utensils and appliances.</span>
<span class="t r" style="left:139px;top:253.07px;font-size:10.55px;line-height:12.66px;color:#141414;">2.</span>
<span class="t r" style="left:152.3px;top:253.07px;font-size:10.55px;line-height:12.66px;color:#141414;">Understand the functions of different kitchen items.</span>
<span class="t r" style="left:139px;top:272.07px;font-size:10.55px;line-height:12.66px;color:#141414;">3.</span>
<span class="t r" style="left:152.3px;top:272.07px;font-size:10.55px;line-height:12.66px;color:#141414;">Engage in pair and group activities to apply vocabulary in context.</span>
<div class="a" style="left:125px;top:298.5px;width:362px;height:1.1px;background:#b4b4b4;"></div>
<span class="t r" style="left:125px;top:310.37px;font-size:10.55px;line-height:12.66px;color:#141414;"><b>Lesson Stages</b></span>
<div class="a" style="left:125px;top:336.8px;width:362px;height:1.1px;background:#b4b4b4;"></div>
<span class="t r" style="left:125px;top:348.37px;font-size:10.55px;line-height:12.66px;color:#141414;"><b>1. Warm-Up (5 minutes)</b></span>
<span class="t r" style="left:125px;top:367.27px;font-size:10.55px;line-height:12.66px;color:#141414;"><b>Activity:</b> Brainstorming</span>
<span class="t r" style="left:139px;top:386.27px;font-size:10.55px;line-height:12.66px;color:#141414;">1.</span>
<span class="t r" style="left:152.3px;top:386.27px;font-size:10.55px;line-height:12.66px;color:#141414;">Write the question on the board:</span>
<div class="a" style="left:166.3px;top:411.7px;width:3.8px;height:3.8px;border:0.8px solid #333;border-radius:50%;box-sizing:border-box"></div>
<span class="t r" style="left:179.3px;top:405.27px;font-size:10.55px;line-height:12.66px;color:#141414;">"What items can you find in a kitchen?"</span>
<span class="t r" style="left:139px;top:424.27px;font-size:10.55px;line-height:12.66px;color:#141414;">2.</span>
<span class="t r" style="left:152.3px;top:424.27px;font-size:10.55px;line-height:12.66px;color:#141414;">Ask students to name as many kitchen items as they can in 1 minute. Write</span>
<span class="t r" style="left:152.3px;top:437.37px;font-size:10.55px;line-height:12.66px;color:#141414;">their answers on the board.</span>
<span class="t r" style="left:139px;top:456.37px;font-size:10.55px;line-height:12.66px;color:#141414;">3.</span>
<span class="t r" style="left:152.3px;top:456.37px;font-size:10.55px;line-height:12.66px;color:#141414;">Introduce the topic: "Today we will learn about kitchen utensils and</span>
<span class="t r" style="left:152.3px;top:469.47px;font-size:10.55px;line-height:12.66px;color:#141414;">appliances, and how to describe their uses."</span>
<span class="t r" style="left:582px;top:119.27px;font-size:10.55px;line-height:12.66px;color:#141414;"><b>Activity:</b> Vocabulary Introduction (Task 1a)</span>
<span class="t r" style="left:595.5px;top:138.17px;font-size:10.55px;line-height:12.66px;color:#141414;">1.</span>
<span class="t r" style="left:608.7px;top:138.17px;font-size:10.55px;line-height:12.66px;color:#141414;">Use the list from the textbook (apron, chopping board, frying pan, grater,</span>
<span class="t r" style="left:608.7px;top:151.37px;font-size:10.55px;line-height:12.66px;color:#141414;">kettle, ladle, oven gloves, saucepan, teapot, whisk).</span>
<span class="t r" style="left:595.5px;top:170.17px;font-size:10.55px;line-height:12.66px;color:#141414;">2.</span>
<span class="t r" style="left:608.7px;top:170.17px;font-size:10.55px;line-height:12.66px;color:#141414;">Pronounce each word, and have students repeat after you.</span>
<span class="t r" style="left:595.5px;top:189.07px;font-size:10.55px;line-height:12.66px;color:#141414;">3.</span>
<span class="t r" style="left:608.7px;top:189.07px;font-size:10.55px;line-height:12.66px;color:#141414;">Explain the purpose of each item (e.g., "A whisk is used to mix eggs or</span>
<span class="t r" style="left:608.7px;top:202.17px;font-size:10.55px;line-height:12.66px;color:#141414;">cream").</span>
<span class="t r" style="left:582px;top:221.07px;font-size:10.55px;line-height:12.66px;color:#141414;transform:scaleX(1.010);"><b>Translation (Українською):</b></span>
<span class="t r" style="left:582px;top:234.27px;font-size:10.55px;line-height:12.66px;color:#141414;"><b>Активність:</b> Введення лексики (Завдання 1а)</span>
<span class="t r" style="left:595.5px;top:253.07px;font-size:10.55px;line-height:12.66px;color:#141414;">1.</span>
<span class="t r" style="left:608.7px;top:253.07px;font-size:10.55px;line-height:12.66px;color:#141414;">Використайте список із підручника (apron, chopping board, frying pan,</span>
<span class="t r" style="left:608.7px;top:266.17px;font-size:10.55px;line-height:12.66px;color:#141414;">grater, kettle, ladle, oven gloves, saucepan, teapot, whisk).</span>
<span class="t r" style="left:595.5px;top:285.27px;font-size:10.55px;line-height:12.66px;color:#141414;">2.</span>
<span class="t r" style="left:608.7px;top:285.27px;font-size:10.55px;line-height:12.66px;color:#141414;transform:scaleX(1.008);">Промовте кожне слово, а учні повторюють за вами.</span>
<span class="t r" style="left:595.5px;top:304.27px;font-size:10.55px;line-height:12.66px;color:#141414;">3.</span>
<span class="t r" style="left:608.7px;top:304.27px;font-size:10.55px;line-height:12.66px;color:#141414;transform:scaleX(1.005);">Поясніть призначення кожного предмета (наприклад: "Віничок</span>
<span class="t r" style="left:608.7px;top:317.57px;font-size:10.55px;line-height:12.66px;color:#141414;">використовується для змішування яєць або вершків").</span>
<div class="a" style="left:582px;top:343.5px;width:361px;height:1.1px;background:#b4b4b4;"></div>
<span class="t r" style="left:582px;top:354.97px;font-size:10.55px;line-height:12.66px;color:#141414;"><b>3. Practice (15 minutes)</b></span>
<span class="t r" style="left:582px;top:373.97px;font-size:10.55px;line-height:12.66px;color:#141414;"><b>Activity 1:</b> Fill in the Blanks (Task 1b)</span>
<span class="t r" style="left:595.5px;top:393.47px;font-size:10.55px;line-height:12.66px;color:#141414;">1.</span>
<span class="t r" style="left:608.7px;top:393.47px;font-size:10.55px;line-height:12.66px;color:#141414;">Students complete the sentences from the textbook using the words provided</span>
<span class="t r" style="left:608.7px;top:405.77px;font-size:10.55px;line-height:12.66px;color:#141414;">(e.g., "A whisk is used to mix eggs").</span>
<span class="t r" style="left:595.5px;top:424.77px;font-size:10.55px;line-height:12.66px;color:#141414;">2.</span>
<span class="t r" style="left:608.7px;top:424.77px;font-size:10.55px;line-height:12.66px;color:#141414;">Check answers as a class.</span>
<span class="t r" style="left:582px;top:444.07px;font-size:10.55px;line-height:12.66px;color:#141414;"><b>Answers:</b></span>
<span class="t r" style="left:595.5px;top:463.37px;font-size:10.55px;line-height:12.66px;color:#141414;">1.</span>
<span class="t r" style="left:608.7px;top:463.37px;font-size:10.55px;line-height:12.66px;color:#141414;">Whisk</span>
<div class="a" style="left:0px;top:474.6px;width:1024px;height:12.4px;background:#505050;"></div>
<div class="a" style="left:0px;top:474.4px;width:1024px;height:1.3px;background:#3c3c3c;"></div>
<span class="t f" style="left:7px;top:478.88px;font-size:9.2px;line-height:11.04px;color:#eeeeee;transform:scaleX(0.886);">Страница 1 из 5</span>
<span class="t f" style="left:83px;top:478.88px;font-size:9.2px;line-height:11.04px;color:#eeeeee;transform:scaleX(0.883);">Слово 4 из 658</span>
<svg style="left:155px;top:478px" width="12" height="10" viewBox="0 0 12 10"><path d="M0.8 1H4.6Q5.8 1 5.8 2.2V9M10.8 1H7Q5.8 1 5.8 2.2M0.8 1V9M10.8 1V6" fill="none" stroke="#e4e4e4" stroke-width="1.1"/></svg>
<span class="t f" style="left:180px;top:478.88px;font-size:9.2px;line-height:11.04px;color:#eeeeee;transform:scaleX(0.920);">афарский (Джибути)</span>
<svg style="left:274px;top:477px" width="12" height="11" viewBox="0 0 12 11"><circle cx="6" cy="1.8" r="1.3" fill="#e4e4e4"/><path d="M1.2 4H10.8M6 4V7M6 7L3.6 11M6 7L8.4 11" fill="none" stroke="#e4e4e4" stroke-width="1.1"/></svg>
<span class="t f" style="left:288px;top:478.88px;font-size:9.2px;line-height:11.04px;color:#eeeeee;transform:scaleX(0.898);">Специальные возможности: все в порядке</span>
<svg style="left:718px;top:477.5px" width="12" height="10" viewBox="0 0 12 10"><path d="M0.8 3V0.8H3M9 0.8H11.2V3" fill="none" stroke="#e4e4e4" stroke-width="1.1"/><path d="M3.6 10V2.6H7L8.6 4.2V10" fill="none" stroke="#e4e4e4" stroke-width="1.1"/></svg>
<span class="t f" style="left:732px;top:478.88px;font-size:9.2px;line-height:11.04px;color:#eeeeee;transform:scaleX(0.911);">Фокусировка</span>
<svg style="left:801px;top:478px" width="12" height="10" viewBox="0 0 12 10"><path d="M0.8 0.8H5.4V9.5M10.8 0.8H6.4V9.5M0.8 0.8V9.5M10.8 0.8V9.5M2 3H4.4M2 5H4.4M2 7H4.4M7.6 3H9.8M7.6 5H9.8M7.6 7H9.8" fill="none" stroke="#e4e4e4" stroke-width="0.9"/></svg>
<div class="a" style="left:823px;top:475.4px;width:32.5px;height:12px;background:#686868;"></div>
<svg style="left:834px;top:477.5px" width="10" height="10" viewBox="0 0 10 10"><path d="M0.8 0.8H9.2V9.5M0.8 0.8V9.5M2.4 3H7.6M2.4 5H7.6M2.4 7H7.6" fill="none" stroke="#e4e4e4" stroke-width="1"/></svg>
<svg style="left:866px;top:477.5px" width="12" height="10" viewBox="0 0 12 10"><path d="M0.8 0.8H9.6V4M0.8 0.8V9.5M0.8 3H9.6M2.4 5H5.4M2.4 7H4.6" fill="none" stroke="#e4e4e4" stroke-width="1"/><circle cx="8.4" cy="7.6" r="2.6" fill="#505050" stroke="#e4e4e4" stroke-width="1"/></svg>
<div class="a" style="left:891.5px;top:484.4px;width:5.5px;height:1px;background:#d9d9d9;"></div>
<div class="a" style="left:902px;top:484.5px;width:80px;height:0.9px;background:#bdbdbd;"></div>
<div class="a" style="left:940.7px;top:482.6px;width:0.9px;height:4.4px;background:#bdbdbd;"></div>
<div class="a" style="left:928px;top:479.5px;width:3px;height:8px;background:#d6d6d6;"></div>
<div class="a" style="left:985.5px;top:484.4px;width:6.2px;height:1px;background:#d9d9d9;"></div>
<div class="a" style="left:988.1px;top:481.5px;width:1px;height:6px;background:#d9d9d9;"></div>
<span class="t f" style="left:1002.5px;top:478.88px;font-size:9.2px;line-height:11.04px;color:#eeeeee;transform:scaleX(1.033);">70%</span>
</div></body></html>
